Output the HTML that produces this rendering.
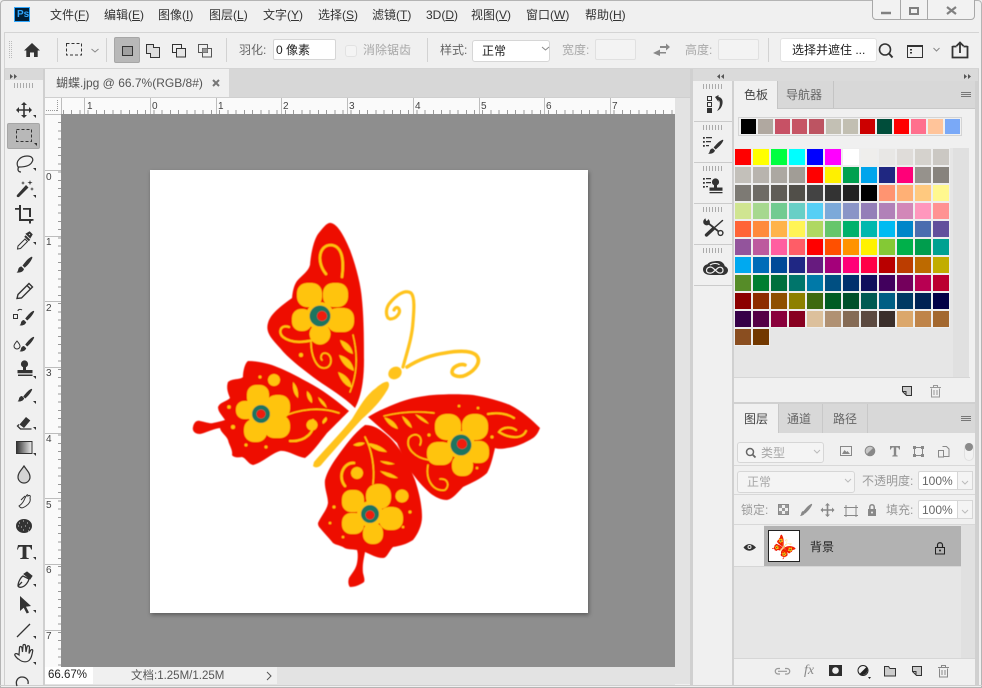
<!DOCTYPE html>
<html><head><meta charset="utf-8"><title>Photoshop</title>
<style>
html,body{margin:0;padding:0;background:#f0f0f0}
#p{position:relative;width:982px;height:688px;overflow:hidden;background:#f0f0f0;font-family:"Liberation Sans","Noto Sans CJK SC",sans-serif;font-size:12px;color:#333}
.b{position:absolute;box-sizing:border-box}
.t{position:absolute;white-space:nowrap;line-height:14px}
.g{color:#a8a8a8}.m{color:#666}
.r{position:absolute;font:10px/11px "Liberation Sans",sans-serif;color:#444}
u{text-decoration:underline}
.grip{position:absolute;height:5px;background:repeating-linear-gradient(90deg,#aaa 0 1px,transparent 1px 3px)}
.inp{position:absolute;box-sizing:border-box;background:#fff;border:1px solid #d6d6d6;border-radius:2px}
#sw{position:absolute;left:735px;top:149px;display:grid;grid-template-columns:repeat(12,16px);grid-auto-rows:16px;gap:2px}
#sw i{display:block;box-shadow:0 0 0 1px #eee}
#top{position:absolute;left:738px;top:117px;width:224px;height:19px;box-sizing:border-box;border:1px solid #d4d4d4;display:flex;gap:2px;padding:1px 0 0 2px}
#top i{display:block;width:15px;height:15px}
svg{position:absolute;left:0;top:0}
</style></head><body><div id="p">

<!-- structure -->
<div class="b" style="left:0;top:0;width:982px;height:688px;border:1px solid #b4b4b4;border-radius:4px 4px 0 0"></div>
<div class="b" style="left:4px;top:32px;width:975px;height:37px;border:1px solid #d4d4d4;border-width:1px 0 1px 1px"></div>
<div class="b" style="left:4px;top:69px;width:1px;height:616px;background:#cfcfcf"></div>
<div class="b" style="left:978px;top:69px;width:1px;height:616px;background:#cfcfcf"></div>
<div class="b" style="left:45px;top:69px;width:645px;height:28px;background:#d7d7d7"></div>
<div class="b" style="left:45px;top:69px;width:184px;height:28px;background:#f0f0f0"></div>
<div class="b" style="left:5px;top:69px;width:38px;height:11px;background:#d9d9d9"></div>
<div class="b" style="left:43px;top:69px;width:2px;height:616px;background:#cfcfcf"></div>
<div class="b" style="left:45px;top:97px;width:645px;height:1px;background:#cfcfcf"></div>
<div class="b" style="left:45px;top:98px;width:630px;height:16px;background:#fafafa"></div>
<div class="b" style="left:45px;top:114px;width:16px;height:553px;background:#fafafa"></div>
<div class="b" style="left:61px;top:110px;width:614px;height:4px;background:repeating-linear-gradient(90deg,transparent 0 2px,#999 2px 3px,transparent 3px 8.22px)"></div>
<div class="b" style="left:58px;top:114px;width:3px;height:553px;background:repeating-linear-gradient(180deg,#999 0 1px,transparent 1px 8.22px)"></div>
<div class="b" style="left:61px;top:114px;width:614px;height:553px;background:#8e8e8e"></div>
<div class="b" style="left:150px;top:170px;width:438px;height:443px;background:#fff;box-shadow:1px 2px 4px rgba(0,0,0,.35)"></div>
<div class="b" style="left:675px;top:98px;width:15px;height:586px;background:#e3e3e3"></div>
<div class="b" style="left:45px;top:667px;width:630px;height:18px;background:#e3e3e3"></div>
<div class="b" style="left:45px;top:667px;width:232px;height:17px;background:#f0f0f0"></div>
<div class="b" style="left:45px;top:667px;width:48px;height:17px;background:#fff"></div>
<div class="b" style="left:0;top:685px;width:982px;height:1px;background:#cfcfcf"></div>

<!-- right dock -->
<div class="b" style="left:690px;top:69px;width:3px;height:616px;background:#d0d0d0"></div>
<div class="b" style="left:693px;top:69px;width:285px;height:12px;background:#dadada"></div>
<div class="b" style="left:732px;top:81px;width:2px;height:604px;background:#d0d0d0"></div>
<div class="b" style="left:694px;top:121px;width:38px;height:1px;background:#cbcbcb"></div>
<div class="b" style="left:694px;top:162px;width:38px;height:1px;background:#cbcbcb"></div>
<div class="b" style="left:694px;top:203px;width:38px;height:1px;background:#cbcbcb"></div>
<div class="b" style="left:694px;top:244px;width:38px;height:1px;background:#cbcbcb"></div>
<div class="b" style="left:694px;top:285px;width:38px;height:1px;background:#cbcbcb"></div>
<div class="grip" style="left:703px;top:84px;width:20px"></div>
<div class="grip" style="left:703px;top:125px;width:20px"></div>
<div class="grip" style="left:703px;top:166px;width:20px"></div>
<div class="grip" style="left:703px;top:207px;width:20px"></div>
<div class="grip" style="left:703px;top:248px;width:20px"></div>
<div class="grip" style="left:14px;top:83px;width:20px"></div>
<div class="b" style="left:975px;top:81px;width:3px;height:604px;background:#d0d0d0"></div>

<!-- swatches panel -->
<div class="b" style="left:734px;top:81px;width:241px;height:28px;background:#d8d8d8"></div>
<div class="b" style="left:734px;top:81px;width:43px;height:28px;background:#f0f0f0"></div>
<div class="b" style="left:777px;top:81px;width:1px;height:28px;background:#c4c4c4"></div>
<div class="b" style="left:833px;top:81px;width:1px;height:28px;background:#c4c4c4"></div>
<div class="b" style="left:778px;top:108px;width:197px;height:1px;background:#c8c8c8"></div>
<div id="top"><i style="background:#000"></i><i style="background:#b0a8a0"></i><i style="background:#c75165"></i><i style="background:#c65565"></i><i style="background:#bd5462"></i><i style="background:#c3c0b4"></i><i style="background:#c2bfb2"></i><i style="background:#cc0000"></i><i style="background:#004d3a"></i><i style="background:#ff0000"></i><i style="background:#ff6f8d"></i><i style="background:#ffc49a"></i><i style="background:#7aa9f7"></i></div>
<div class="b" style="left:734px;top:148px;width:219px;height:229px;background:#e6e6e6"></div>
<div class="b" style="left:953px;top:148px;width:16px;height:229px;background:#e0e0e0"></div>
<div class="b" style="left:734px;top:377px;width:236px;height:1px;background:#d6d6d6"></div>
<div id="sw">
<i style="background:#ff0000"></i><i style="background:#ffff00"></i><i style="background:#00ff40"></i><i style="background:#00ffff"></i><i style="background:#0000ff"></i><i style="background:#ff00ff"></i><i style="background:#ffffff"></i><i style="background:#efeeec"></i><i style="background:#e8e7e5"></i><i style="background:#dfdcd9"></i><i style="background:#d5d2cd"></i><i style="background:#cbc8c3"></i>
<i style="background:#c3c0ba"></i><i style="background:#b8b4ae"></i><i style="background:#aca8a2"></i><i style="background:#a19d96"></i><i style="background:#ff0000"></i><i style="background:#fff000"></i><i style="background:#00a04f"></i><i style="background:#00a5ec"></i><i style="background:#1f2781"></i><i style="background:#ff0078"></i><i style="background:#96928c"></i><i style="background:#87837d"></i>
<i style="background:#7d7a74"></i><i style="background:#6e6b65"></i><i style="background:#605d57"></i><i style="background:#514f49"></i><i style="background:#434343"></i><i style="background:#333333"></i><i style="background:#222222"></i><i style="background:#000000"></i><i style="background:#ff9471"></i><i style="background:#ffb075"></i><i style="background:#ffc97f"></i><i style="background:#fff88f"></i>
<i style="background:#d0e591"></i><i style="background:#a6d88f"></i><i style="background:#72cb91"></i><i style="background:#68cfc6"></i><i style="background:#56cff5"></i><i style="background:#7ca9d9"></i><i style="background:#8a95c7"></i><i style="background:#947fb8"></i><i style="background:#b181b8"></i><i style="background:#d287b8"></i><i style="background:#ff97bd"></i><i style="background:#ff9292"></i>
<i style="background:#ff6437"></i><i style="background:#ff8b3c"></i><i style="background:#ffb34a"></i><i style="background:#fff455"></i><i style="background:#afd862"></i><i style="background:#66c66b"></i><i style="background:#00b16b"></i><i style="background:#00b8ae"></i><i style="background:#00bbf2"></i><i style="background:#0086c9"></i><i style="background:#4a6daf"></i><i style="background:#624f9c"></i>
<i style="background:#93549c"></i><i style="background:#bd5a9e"></i><i style="background:#ff5ea0"></i><i style="background:#ff5d67"></i><i style="background:#ff0000"></i><i style="background:#ff5000"></i><i style="background:#ff9300"></i><i style="background:#fff200"></i><i style="background:#84c935"></i><i style="background:#00b04a"></i><i style="background:#009d4d"></i><i style="background:#00a191"></i>
<i style="background:#00a9f0"></i><i style="background:#006cb8"></i><i style="background:#004a98"></i><i style="background:#1f2784"></i><i style="background:#671b7f"></i><i style="background:#a4007a"></i><i style="background:#ff0078"></i><i style="background:#ff0046"></i><i style="background:#b90000"></i><i style="background:#bc3d00"></i><i style="background:#bd6a00"></i><i style="background:#c1ad00"></i>
<i style="background:#568c28"></i><i style="background:#007e31"></i><i style="background:#006f3d"></i><i style="background:#00756b"></i><i style="background:#0079a8"></i><i style="background:#004f82"></i><i style="background:#00306d"></i><i style="background:#100f5c"></i><i style="background:#41005d"></i><i style="background:#74005c"></i><i style="background:#b80052"></i><i style="background:#bb0030"></i>
<i style="background:#8c0000"></i><i style="background:#8d2c00"></i><i style="background:#8e4f00"></i><i style="background:#8d8000"></i><i style="background:#3e6a10"></i><i style="background:#005c23"></i><i style="background:#005029"></i><i style="background:#005a52"></i><i style="background:#005e84"></i><i style="background:#003963"></i><i style="background:#002254"></i><i style="background:#020047"></i>
<i style="background:#360048"></i><i style="background:#550046"></i><i style="background:#8a003b"></i><i style="background:#880020"></i><i style="background:#dcc09c"></i><i style="background:#b09173"></i><i style="background:#856b55"></i><i style="background:#5c4a40"></i><i style="background:#3b2f2b"></i><i style="background:#dba76b"></i><i style="background:#bf8449"></i><i style="background:#a3682f"></i>
<i style="background:#8a4e20"></i><i style="background:#723800"></i>
</div>

<!-- layers panel -->
<div class="b" style="left:734px;top:402px;width:241px;height:2px;background:#d0d0d0"></div>
<div class="b" style="left:734px;top:404px;width:241px;height:29px;background:#d8d8d8"></div>
<div class="b" style="left:734px;top:404px;width:44px;height:29px;background:#f0f0f0"></div>
<div class="b" style="left:778px;top:404px;width:1px;height:29px;background:#c8c8c8"></div>
<div class="b" style="left:822px;top:404px;width:1px;height:29px;background:#c8c8c8"></div>
<div class="b" style="left:867px;top:404px;width:1px;height:29px;background:#c8c8c8"></div>
<div class="inp" style="left:737px;top:442px;width:87px;height:21px;border-radius:3px;background:#f4f4f4"></div>
<div class="b" style="left:734px;top:465px;width:241px;height:1px;background:#d8d8d8"></div>
<div class="inp" style="left:737px;top:471px;width:118px;height:22px;border-radius:3px;background:#f4f4f4"></div>
<div class="inp" style="left:918px;top:471px;width:55px;height:19px"></div>
<div class="b" style="left:957px;top:471px;width:16px;height:19px;background:#f4f4f4;border:1px solid #d6d6d6"></div>
<div class="b" style="left:734px;top:494px;width:241px;height:1px;background:#d8d8d8"></div>
<div class="inp" style="left:918px;top:500px;width:55px;height:19px"></div>
<div class="b" style="left:957px;top:500px;width:16px;height:19px;background:#f4f4f4;border:1px solid #d6d6d6"></div>
<div class="b" style="left:734px;top:524px;width:241px;height:1px;background:#d8d8d8"></div>
<div class="b" style="left:734px;top:525px;width:227px;height:133px;background:#e6e6e6"></div>
<div class="b" style="left:734px;top:525px;width:30px;height:41px;background:#f0f0f0"></div>
<div class="b" style="left:961px;top:525px;width:14px;height:133px;background:#e0e0e0"></div>
<div class="b" style="left:764px;top:526px;width:197px;height:40px;background:#b2b2b2"></div>
<div class="b" style="left:734px;top:566px;width:227px;height:1px;background:#d6d6d6"></div>
<div class="b" style="left:734px;top:658px;width:241px;height:1px;background:#d6d6d6"></div>
<div class="b" style="left:768px;top:530px;width:32px;height:32px;background:#fff;border:1px solid #222"></div>

<!-- options fields -->
<div class="b" style="left:114px;top:37px;width:26px;height:26px;background:#b8b8b8;border:1px solid #a6a6a6;border-radius:2px"></div>
<div class="inp" style="left:273px;top:39px;width:63px;height:21px"></div>
<div class="inp" style="left:345px;top:45px;width:12px;height:12px;background:#f4f4f4;border-color:#e2e2e2;border-radius:3px"></div>
<div class="inp" style="left:472px;top:40px;width:78px;height:22px;border-radius:3px"></div>
<div class="inp" style="left:595px;top:39px;width:41px;height:21px;background:#f3f3f3;border-color:#e0e0e0"></div>
<div class="inp" style="left:718px;top:39px;width:41px;height:21px;background:#f3f3f3;border-color:#e0e0e0"></div>
<div class="inp" style="left:780px;top:38px;width:97px;height:24px;border-radius:3px;border-color:#e2e2e2"></div>
<div class="b" style="left:7px;top:123px;width:33px;height:26px;background:#b8b8b8;border:1px solid #a6a6a6;border-radius:2px"></div>

<!-- window buttons -->
<div class="b" style="left:872px;top:-2px;width:103px;height:22px;background:#f2f2f2;border:1px solid #a8a8a8;border-radius:0 0 4px 4px"></div>
<div class="b" style="left:900px;top:0;width:1px;height:19px;background:#a8a8a8"></div>
<div class="b" style="left:927px;top:0;width:1px;height:19px;background:#a8a8a8"></div>

<!-- graphics -->
<svg width="982" height="688" viewBox="0 0 982 688" fill="none">
<defs>
<filter id="sf" x="-5%" y="-5%" width="110%" height="110%"><feGaussianBlur stdDeviation=".45"/></filter>
<g id="bf" filter="url(#sf)">
 <!-- wings -->
 <g fill="#ee0c00">
 <path d="M331 223C338 224 345 238 350 250C356 266 361 285 362 300C364 320 364 345 364 360C364 378 362 395 355 408C343 396 328 388 313 377C300 367 288 358 280 348C273 340 265 333 268 323C270 315 278 308 292 298C293 288 295 284 297 281C302 275 308 272 310 265C311 252 314 240 318 234C323 228 327 222 331 223Z"/>
 <path d="M248 361C258 361 270 364 277 367C290 372 302 379 313 385C327 393 338 402 349 411C340 420 332 428 327 433C319 443 313 452 305 458C297 457 288 450 280 451C272 453 262 463 253 465C248 464 246 458 242 457C237 458 233 457 232 455C233 450 229 445 228 440C226 435 221 433 220 428C212 429 206 433 200 434C195 434 192 431 193 427C194 422 197 420 200 421C206 422 210 424 213 423C218 422 222 421 225 420C222 415 218 412 218 407C220 402 226 402 230 398C228 393 226 388 228 382C233 378 240 380 243 377C243 371 245 363 248 361Z"/>
 <path d="M368 417C378 411 389 406 400 402C411 398 422 396 433 395C447 394 461 394 473 395C486 397 500 401 510 405C522 411 532 420 540 428C538 433 536 436 533 438C525 443 516 447 507 448C502 449 498 449 495 448C493 456 491 466 487 473C481 479 471 483 463 487C458 492 453 499 447 500C441 500 435 497 430 493C423 487 416 479 410 470C405 461 401 452 397 443C389 435 378 426 368 417Z"/>
 <path d="M365 425C372 425 378 428 383 432C390 437 396 444 400 450C406 460 411 470 415 480C419 492 422 505 422 517C422 525 418 534 413 540C407 544 400 546 393 547C389 551 387 558 383 558C376 558 370 554 365 552C364 558 362 565 363 573C364 577 365 580 364 582C360 585 355 587 350 587C348 585 348 581 349 578C352 573 356 569 357 563C358 558 358 553 357 550C352 549 347 550 343 547C339 545 336 545 333 543C329 538 324 533 320 528C318 526 318 524 318 523C321 516 327 510 328 503C328 496 324 488 325 480C327 472 332 464 337 457C345 446 354 433 365 425Z"/>
 </g>
 <!-- body / antennae -->
 <path fill="#ffc31a" d="M314 462C325 449 340 434 352 419C360 406 366 395 376 388C380 384 386 381 388 382C390 384 389 388 386 392C380 402 371 411 362 419C350 432 335 449 322 464C319 468 315 468 313 466Z"/>
 <ellipse cx="395" cy="373" rx="7" ry="6" transform="rotate(-35 395 373)" fill="#ffc31a"/>
 <g stroke="#ffc31a" stroke-linecap="round" fill="none">
 <path stroke-width="3.200" d="M403 367C407 352 412 338 413 322C414 310 415 297 411 293C405 289 396 295 389 304C385 310 386 318 390 319C396 319 401 313 399 309C397 306 395 308 394 310"/>
 <path stroke-width="3.600" d="M407 367C418 360 430 355 445 353C456 351 470 350 476 355C482 361 476 370 466 375C460 378 452 376 452 372C452 367 460 363 465 365"/>
 </g>
 <!-- flowers -->
 <g fill="#ffc40a">
 <circle cx="320" cy="316" r="14"/><circle cx="261" cy="414" r="13"/><circle cx="461" cy="445" r="14"/><circle cx="370" cy="514" r="13"/>
 <rect x="297" y="283" width="25" height="24" rx="10" /><rect x="323" y="283" width="25" height="24" rx="10"/><rect x="327" y="308" width="27" height="24" rx="10"/><circle cx="320" cy="334" r="10.500"/><rect x="292" y="309" width="20" height="22" rx="9"/>
 <rect x="247" y="385" width="22" height="22" rx="9"/><rect x="266" y="395" width="24" height="24" rx="10"/><rect x="264" y="415" width="26" height="23" rx="10"/><rect x="244" y="419" width="23" height="23" rx="10"/><rect x="236" y="401" width="19" height="18" rx="8"/>
 <rect x="435" y="414" width="26" height="26" rx="11"/><rect x="462" y="414" width="26" height="26" rx="11"/><rect x="467" y="441" width="22" height="22" rx="9"/><rect x="452" y="455" width="21" height="21" rx="9"/><rect x="427" y="442" width="26" height="23" rx="10"/>
 <rect x="366" y="484" width="25" height="25" rx="11"/><rect x="379" y="507" width="24" height="23" rx="10"/><rect x="363" y="523" width="20" height="21" rx="9"/><rect x="342" y="513" width="22" height="21" rx="9"/><rect x="342" y="490" width="22" height="22" rx="9"/>
 <circle cx="274" cy="380" r="6"/><circle cx="402" cy="496" r="6.500"/><circle cx="357" cy="473" r="6"/><circle cx="312" cy="425" r="5.500"/>
 <circle cx="301" cy="355" r="2"/><circle cx="229" cy="407" r="1.800"/><circle cx="233" cy="427" r="2"/><circle cx="246" cy="445" r="1.500"/><circle cx="266" cy="447" r="1.500"/><circle cx="260" cy="377" r="1.500"/><circle cx="459" cy="406" r="1.300"/><circle cx="478" cy="408" r="1.300"/><circle cx="492" cy="437" r="1.500"/><circle cx="429" cy="435" r="1.500"/><circle cx="477" cy="468" r="1.300"/><circle cx="334" cy="507" r="1.500"/><circle cx="330" cy="523" r="1.300"/><circle cx="343" cy="537" r="1.300"/><circle cx="410" cy="512" r="1.500"/><circle cx="403" cy="527" r="1.300"/>
 <path d="M340 340Q351 343 353 354Q343 351 340 340ZM339 355Q352 358 354 371Q343 367 339 355ZM338 372Q350 376 352 388Q342 385 338 372Z"/>
 <path d="M293 382Q299 388 298 398Q292 393 293 382ZM307 391Q313 396 312 403Q306 399 307 391ZM318 397Q325 401 327 408Q320 404 318 397ZM326 417Q329 420 323 424Q321 421 326 417Z"/>
 <path d="M384 417Q395 420 398 429Q389 427 384 417ZM402 416Q410 420 412 428Q405 425 402 416ZM415 414Q424 417 429 424Q420 421 415 414Z"/>
 <path d="M353 445Q359 441 365 443Q360 448 353 445ZM367 443Q380 444 387 452Q375 452 367 443ZM380 461Q388 461 395 464Q386 466 380 461ZM380 471Q390 472 398 478Q388 479 380 471Z"/>
 </g>
 <g stroke="#ffc40a" fill="none" stroke-linecap="round">
 <path stroke-width="2.600" d="M326 274C316 262 319 245 331 245C343 246 344 262 342 277"/>
 <path stroke-width="2.200" d="M289 327C280 324 278 333 283 337C292 344 305 342 313 340"/>
 <path stroke-width="1.600" d="M311 342C311 355 316 369 325 368C333 367 333 354 325 353C321 353 320 358 322 360"/>
 <path stroke-width="1.400" d="M353 335C358 355 357 375 350 392"/>
 <path stroke-width="1.600" d="M280 418C300 408 322 407 339 413"/>
 <path stroke-width="2.200" d="M290 441C305 442 316 432 313 420"/>
 <path stroke-width="1.400" d="M384 416C400 412 418 411 434 413"/>
 <path stroke-width="1.600" d="M429 460C415 458 405 448 409 438C415 431 424 436 420 445"/>
 <path stroke-width="1.600" d="M428 465C425 482 435 492 445 490C450 486 448 478 440 479"/>
 <path stroke-width="2" d="M488 414C498 412 508 414 514 418"/>
 <path stroke-width="2" d="M526 431C522 440 508 438 499 432C503 426 512 427 516 430"/>
 <path stroke-width="1.600" d="M365 437C372 450 375 468 373 484"/>
 <path stroke-width="2.600" d="M345 486C337 476 344 462 354 463"/>
 </g>
 <!-- centres -->
 <g fill="#1c7560">
 <circle cx="320" cy="316" r="10.500"/><circle cx="261" cy="414" r="9"/><circle cx="461" cy="445" r="10.500"/><circle cx="370" cy="514" r="9"/>
 </g>
 <g fill="#f01a08">
 <circle cx="322" cy="316" r="5"/><circle cx="261" cy="414" r="4.500"/><circle cx="462" cy="444" r="5"/><circle cx="370" cy="515" r="4.500"/>
 </g>
</g>
</defs>
<use href="#bf"/>
<svg x="769" y="531" width="30" height="30" viewBox="150 170 438 443"><use href="#bf"/></svg>

<!-- Ps logo -->
<rect x="14.500" y="7.500" width="15" height="14" fill="#001e36" stroke="#31a8ff"/>

<!-- ruler major ticks -->
<path stroke="#bdbdbd" d="M84.500 98v16M150.500 98v16M216.500 98v16M281.500 98v16M347.500 98v16M413.500 98v16M479.500 98v16M544.500 98v16M610.500 98v16M45 170.500h16M45 236.500h16M45 301.500h16M45 367.500h16M45 433.500h16M45 498.500h16M45 564.500h16M45 630.500h16M61.500 98v16M45 114.500h16"/>
<path stroke="#999" stroke-dasharray="1 1" d="M46 110.500h12M57.500 100v12"/>

<!-- tab arrows -->
<g fill="#555">
<path d="M10 74l3 2.500-3 2.500zM14 74l3 2.500-3 2.500zM964 74l3 2.500-3 2.500zM968 74l3 2.500-3 2.500zM724 74l-3 2.500 3 2.500zM720 74l-3 2.500 3 2.500z"/>
</g>
<path d="M213 80l6 6m0-6l-6 6" stroke="#777" stroke-width="2"/>

<!-- window icons -->
<path d="M881 13h10" stroke="#808080" stroke-width="2.500"/>
<rect x="910" y="8" width="8" height="6" stroke="#808080" stroke-width="2"/>
<path d="M947 7l9 7m0-7l-9 7" stroke="#808080" stroke-width="2.200"/>

<!-- options icons -->
<path d="M9.500 41v17M11.500 41v17" stroke="#bbb" stroke-dasharray="1 1"/>
<path fill="#333" d="M24 50.500l8-7.500 8 7.500h-2.300v6.500h-3.700v-4.500h-4v4.500h-3.700v-6.500z"/>
<path stroke="#d2d2d2" d="M57.500 38v24M106.500 38v24M226.500 38v24M427.500 38v24M768.500 38v24"/>
<rect x="66.500" y="43.500" width="15" height="11.500" stroke="#333" stroke-dasharray="3 2"/>
<path d="M91.500 49l3.500 3 3.500-3" stroke="#888"/>
<rect x="122.500" y="46.500" width="10" height="9" stroke="#333" fill="#a0a0a0"/>
<path d="M146.500 44.500h7v3h6v10h-9v-4h-4z" stroke="#333" fill="#ddd"/>
<rect x="172.500" y="44.500" width="9" height="8" stroke="#333"/><rect x="176.500" y="48.500" width="9" height="8.500" stroke="#333" fill="#e6e6e6"/>
<rect x="198.500" y="44.500" width="9" height="8" stroke="#555"/><rect x="202.500" y="48.500" width="9" height="8.500" stroke="#555"/><rect x="202.500" y="48.500" width="5" height="4" fill="#999"/>
<path d="M542 47l3.500 3 3.500-3" stroke="#888"/>
<path fill="#888" d="M660 47.500h6v-2.500l4 3.500-4 3.500v-2.500h-6zM666 53.500h-6v-2.500l-7 3.500 7 3v-2.500h6z" transform="translate(0 -1.500)"/>
<circle cx="885" cy="49.500" r="5.500" stroke="#333" stroke-width="1.600"/><path d="M889 53.500l3.500 4" stroke="#333" stroke-width="2"/>
<rect x="907.500" y="45.500" width="15" height="12" stroke="#333"/><path d="M907 45h16v2h-16zM910 49h2v1.500h-2zM910 52h2v1.500h-2z" fill="#333"/>
<path d="M933.500 48l3 3 3-3" stroke="#888"/>
<path d="M952.500 46.500h4M963.500 46.500h4M952.500 46v11.500h15V46" stroke="#333" stroke-width="1.800"/><path d="M960 53v-10M956.500 46l3.500-3.500 3.500 3.500" stroke="#333" stroke-width="1.800"/>

<!-- tool icons -->
<g fill="#333" stroke="none">
<!-- move -->
<path d="M24 102l3 3h-2.200v4.200H29V107l3 3-3 3v-2.200h-4.200V115H27l-3 3-3-3h2.200v-4.200H19V113l-3-3 3-3v2.200h4.200V105H21z"/>
<!-- wand -->
<path d="M17 195l9-10 2.500 2.500-9.500 9.500c-1.500 .5-3-.5-2-2zM30 180l.6 2 2 .6-2 .6-.6 2-.6-2-2-.6 2-.6zM23 181l.5 1.500 1.500.5-1.500.5-.5 1.500-.5-1.500-1.500-.5 1.500-.5zM32 187l.5 1.500 1.500.5-1.500.5-.5 1.500-.5-1.500-1.500-.5 1.500-.5z"/>
<!-- crop -->
<path d="M19 205h2v14h11v2H19zM15 208h4v1.800h-4zM23 208h8v9h-2v-7.200h-6zM31 219h2.500v1.800H31zM29 221h2v2.500h-2z"/>
<!-- brush -->
<path d="M31 257c1.200-.5 1.700 0 1.200 1.200-1.500 3.500-4.500 7-7.500 9.500l-2.200-2.200c2.500-3 5-6.800 8.500-8.500zM21.500 266.500l2.500 2.500c-.8 2.800-4 4-7.500 3.500 1.800-1 1.500-3 2-4 .7-1.300 1.800-2 3-2z"/>
<!-- history brush -->
<path d="M33 311c1-.4 1.400 0 1 1-1.300 3-4 6.200-6.800 8.500l-2-2c2.300-2.700 4.700-6 7.800-7.500zM24 320l2.200 2.200c-.7 2.500-3.600 3.600-6.700 3.200 1.600-1 1.300-2.700 1.800-3.600.6-1.200 1.600-1.800 2.700-1.800z"/>
<!-- mixer -->
<path d="M33 337c1-.4 1.400 0 1 1-1.300 3-4 6.200-6.800 8.500l-2-2c2.300-2.700 4.700-6 7.800-7.500zM24 346l2.200 2.200c-.7 2.500-3.600 3.600-6.700 3.200 1.600-1 1.300-2.700 1.800-3.600.6-1.200 1.600-1.800 2.700-1.800z"/>
<!-- stamp -->
<circle cx="24.500" cy="364" r="3.600"/><path d="M23 366h3v4h6.500v3.200h-15V370H23zM18 374.500h14.500v1.500H18z"/>
<!-- history -->
<path d="M31 391c1-.4 1.400 0 1 1-1.300 3-4 6.200-6.800 8.500l-2-2c2.300-2.700 4.700-6 7.800-7.500zM22 398l2.200 2.200c-.7 2.500-3.600 3.600-6.700 3.200 1.600-1 1.300-2.700 1.800-3.600.6-1.200 1.600-1.800 2.700-1.800z" transform="translate(0 -2)"/>
<!-- eraser -->
<path d="M26 417l4.300 3.500-6.300 7.500-4.500-3.500z"/>
<!-- T -->
<path d="M18 545h14v4.500h-1c-.3-2-1-2.800-3-2.800h-1.600v10c0 1 .6 1.300 2.300 1.300v1H20.300v-1c1.700 0 2.300-.3 2.300-1.300v-10H21c-2 0-2.700.8-3 2.800h-1z"/>
<!-- arrow -->
<path d="M20 596l11 10-5 .7 3 5.800-2.300 1-3-5.800-3.700 3.300z"/>
<!-- sponge -->
<ellipse cx="24" cy="526" rx="8" ry="7"/>
<!-- tool corner marks -->
<path d="M36 118v-3h-3zM37 146v-3h-3zM36 171v-3h-3zM36 198v-3h-3zM36 245v-3h-3zM36 379v-3h-3zM36 404v-3h-3zM36 430v-3h-3zM36 456v-3h-3zM36 560v-3h-3zM36 587v-3h-3zM36 613v-3h-3zM36 639v-3h-3zM36 665v-3h-3z"/>
</g>
<!-- sponge holes -->
<path d="M19 523h1M23 521h1M27 523h1M21 527h1M25 526h1M29 528h1M23 530h1M18 526h1M28 531h1" stroke="#ccc"/>
<g stroke="#333" fill="none">
<rect x="16.500" y="129.500" width="15" height="12" stroke-dasharray="3 2"/>
<!-- lasso -->
<path d="M18 167c-3-6 3-11 9-11 5 0 7 3 5 6-2 4-8 5-13 5zM19 167c-2 2-1 5 2 5" stroke-width="1.200"/>
<!-- eyedropper -->
<path d="M18 246l7-7 2.500 2.500-7 7-3 .5z" stroke-width="1"/><path d="M25 236l4.500 4.500M27 234l2.500-1.500 2 2-1.500 2.500z" stroke-width="2"/>
<!-- pencil -->
<path d="M17 298.500l1-4 11-11 3.500 3.500-11 11z" stroke-width="1.400"/><path d="M27 285.500l3.500 3.500" stroke-width="1.400"/>
<!-- history source -->
<rect x="13.500" y="314.500" width="4" height="4" stroke-width="1"/><path d="M18 311c0-2 3-2 4-1" stroke-width="1"/>
<!-- mixer drop -->
<path d="M17 341c-2 2.500-3 3.500-3 5a3 3 0 0 0 6 0c0-1.500-1-2.500-3-5z" stroke-width="1"/>
<!-- eraser base -->
<path d="M19 424.500l-1.500 1.500 3 3h11" stroke-width="1.300"/>
<!-- drop -->
<path d="M24 466c-3 4.500-6 7-6 11a6 6 0 0 0 12 0c0-4-3-6.500-6-11z" stroke-width="1.200" fill="#d4d4d4"/>
<!-- smudge -->
<path d="M19 506c3-2 5-5 6-8 1-2 3-5 3-2 1-1 3-1 2 2 1 3-1 6-4 8s-5 3-7 0zM21 500l4-4" stroke-width="1"/>
<!-- pen -->
<path d="M18 586c0-4 3-9 5-10l6 3c-.6 3-3.500 7-7 8-1.500.5-3 .5-4-1zM18 586l4-4" stroke-width="1.300"/><path d="M24 574l3-2 5 4-2 3z" fill="#333" stroke-width="1"/>
<!-- line -->
<path d="M17 637l13-13" stroke-width="1.300"/>
<!-- hand -->
<path d="M18 659c-2-2-4-4-3-5 1-1 3 0 4 1l.5-7c0-2 2-2 2.500 0l.5 4 .5-6c0-2 2.500-2 2.500 0l.5 6 1-5c.5-2 2.500-1.500 2.500 .5l-.5 6 1.500-3c1-1.500 2.500-1 2.200 .5-.5 3-1 6-2.500 8-2 3.500-7.500 4-11.700 0z" stroke-width="1.200"/>
<!-- rotate -->
<path d="M17 686c-2-5 1-9 5-9s7 3 6 7" stroke-width="1.300"/>
</g>
<!-- gradient -->
<linearGradient id="gr" x1="0" x2="1"><stop offset="0" stop-color="#333"/><stop offset="1" stop-color="#eee"/></linearGradient>
<rect x="16.500" y="441.500" width="15.500" height="12" fill="url(#gr)" stroke="#333"/>

<!-- dock icons -->
<g fill="#333">
<rect x="707.500" y="96.500" width="4" height="4" fill="none" stroke="#333"/><rect x="707.500" y="102.500" width="4" height="4" fill="none" stroke="#333"/><rect x="707" y="108" width="5" height="5"/>
<path d="M715 97l3.500-2v2c3.500 .5 4.500 3.500 4 6.500-.5 3-2 6-5.500 7.500 2-3 3.500-6 2.500-9.500-.3-1-1-1.500-1-1.500v2z"/>
<path d="M703 137h1.800v1.800H703zM706 137h6v1.300h-6zM703 141h1.800v1.800H703zM706 141h5v1.300h-5zM703 145h1.800v1.800H703zM706 145h3v1.300h-3z"/>
<path d="M722 140c1.200-.5 1.600 0 1.100 1-1.500 3.200-4.500 6.200-7.500 8.500l-2-2c2.500-2.800 5-6 8.400-7.500zM713 148.500l2 2c-.8 2.600-3.800 3.500-7 3.200 1.800-1 1.500-2.500 2-3.500.6-1.200 1.800-1.900 3-1.700z"/>
<path d="M703 178h1.800v1.800H703zM706 178h5v1.300h-5zM703 182h1.800v1.800H703zM706 182h5v1.300h-5zM703 186h1.800v1.800H703zM706 186h2v1.300h-2z"/>
<circle cx="715.500" cy="182" r="3.600"/><path d="M714 184h3v3.500h5.500v3.200h-13v-3.200h4.500zM709.500 192h13v1.300h-13z"/>
</g>
<!-- tools: wrench + screwdriver -->
<g fill="none" stroke="#333" stroke-linecap="round">
<path d="M708 223L718 231" stroke-width="1.800"/>
<path d="M705 219.500c-1.500 1.500-1.500 3.500 0 4.500 1.500 1 3 .8 4-.5 .5-1.300 0-2.500-.5-3.200l-1.500 1.700-1.500-1z" stroke-width="1.400" fill="#333"/>
<circle cx="720.500" cy="233" r="2.400" stroke-width="1.400"/>
<path d="M722.500 220.500L714 228" stroke-width="1.500"/>
<path d="M713.500 228.500L706.500 235" stroke-width="3.400"/>
</g>
<!-- creative cloud -->
<path fill="#333" d="M718 261c3.500 0 6.300 2.500 6.800 5.200 2 .7 3.200 2.200 3.200 4 0 2.800-2.500 4.800-6 4.800h-11c-5 0-8-2.200-8-5.500 0-2.800 2-4.700 4.500-5.200C708.500 262 713 261 718 261z"/>
<path d="M706.500 270.500c0-3 4-4.800 6.800-2.200l4 3.700c2.500 2 5.700 1 5.700-1.800s-3-3.800-5-2.300l-5 4.300c-2 1.600-6.500 1-6.500-1.700zM710 265c3-2 7-2 9.500-.3" stroke="#f0f0f0" stroke-width="1.200"/>

<!-- panel menu icons -->
<path d="M961 92.500h10M961 94.500h10M961 96.500h10M961 416.500h10M961 418.500h10M961 420.500h10" stroke="#777"/>
<!-- new/trash swatch -->
<path d="M902.500 386.500h9v9h-5l-4-4z" fill="#ccc" stroke="#333"/><path d="M902.500 391.500h3.500v3.500" stroke="#333"/>
<path d="M931.500 388.500v8.500h8v-8.500M930 387.500h11M933.500 387v-1.500h4v1.500M934 390v5M937 390v5" stroke="#999"/>

<!-- layer filter icons -->
<circle cx="750" cy="452" r="3.500" stroke="#666" stroke-width="1.500"/><path d="M752.500 454.500l3 3" stroke="#666" stroke-width="1.800"/>
<path d="M814 450l3 3 3-3M845 479l3 3 3-3M962 481l3 3 3-3M962 510l3 3 3-3" stroke="#bbb" fill="none"/>
<rect x="840.500" y="446.500" width="11" height="9" stroke="#888"/><path d="M842 454l2.500-4 2 2 1-1 2.500 3z" fill="#888"/>
<circle cx="870" cy="451" r="4.800" fill="#c8c8c8" stroke="#888"/><path d="M873.400 447.600a4.800 4.800 0 0 1-6.800 6.800z" fill="#888"/>
<path fill="#888" d="M890 446h10v3.500h-1c-.2-1.300-.7-2-1.800-2h-1v7c0 .8 .4 1 1.500 1v1h-5.400v-1c1.100 0 1.500-.2 1.500-1v-7h-1c-1.100 0-1.600 .7-1.800 2h-1z"/>
<path d="M914.500 447.500h8v8h-8z" stroke="#888"/><path d="M913 446h3v3h-3zM921 446h3v3h-3zM913 454h3v3h-3zM921 454h3v3h-3z" fill="#888"/>
<path d="M942.500 446.500h4l2.500 2.500v7.500h-5M938.500 450.500h5v6.500h-5z" stroke="#888"/>
<rect x="964.500" y="443.500" width="9" height="17" rx="4.500" fill="#f2f2f2" stroke="#e0e0e0"/><circle cx="969" cy="447" r="4" fill="#8a8a8a"/>

<!-- lock row -->
<rect x="778.500" y="504.500" width="10" height="10" stroke="#888"/><path d="M779 505h3v3h-3zM785 505h3v3h-3zM782 508h3v3h-3zM779 511h3v3h-3zM785 511h3v3h-3z" fill="#999"/>
<path d="M810 505c1-.4 1.400 0 1 1-1.300 3-4 6.200-6.800 8.500l-2-2c2.300-2.700 4.700-6 7.800-7.500zM802 512l2 2c-.7 1.800-2.800 3-5 3 1-1 1-2 1.300-3 .3-1 1-1.700 1.700-2z" fill="#888" transform="translate(1 -1)"/>
<path fill="#888" d="M827.500 503l2.500 2.500h-1.700v3.700h3.700v-1.700l2.500 2.500-2.500 2.500v-1.700h-3.700v3.700h1.700l-2.500 2.500-2.500-2.500h1.700v-3.700h-3.700v1.700l-2.500-2.500 2.500-2.500v1.700h3.700v-3.700H825z"/>
<path d="M846 507.500h10v8h-10zM844 507.500h14M846 505v12M856 505v12M844 515.500h14" stroke="#888"/>
<path fill="#888" d="M868 509h8v7h-8z"/><path d="M869.800 509v-2c0-3 4.400-3 4.400 0v2" stroke="#888" stroke-width="1.500"/><circle cx="872" cy="512.500" r="1" fill="#f0f0f0"/>

<!-- layer row icons -->
<path d="M743.500 547.500c3-4 8-5 12.500 0-4.500 4.500-9.500 4-12.500 0z" fill="#333"/><circle cx="749.500" cy="547" r="2" fill="#f0f0f0"/><circle cx="749.500" cy="547" r="1" fill="#333"/>
<rect x="935.500" y="547.500" width="9" height="6.500" stroke="#222"/><path d="M937.500 547v-2c0-3 5-3 5 0v2" stroke="#222" stroke-width="1.200"/><circle cx="940" cy="550.500" r="1" fill="#222"/>

<!-- layer footer -->
<path d="M780 668.500h-2a2.700 2.700 0 0 0 0 5.500h2M785 668.500h2a2.700 2.700 0 0 1 0 5.500h-2M778 671.300h9" stroke="#999" stroke-width="1.200"/>
<rect x="829" y="665" width="13" height="11" fill="#2e2e2e"/><circle cx="835.500" cy="670.500" r="3.300" fill="#f0f0f0"/>
<circle cx="863" cy="670.500" r="5" fill="#f0f0f0" stroke="#222"/><path d="M866.500 667a5 5 0 0 1-7 7z" fill="#222"/><path d="M868 677h3l-1.500 2z" fill="#222"/>
<path d="M884.500 666.500h4l1.500 2h5.500v7.500h-11z" fill="#ccc" stroke="#333"/>
<path d="M912.500 666.500h9v9h-5l-4-4z" fill="#ccc" stroke="#333"/><path d="M912.500 671.500h3.500v3.500" stroke="#333"/>
<path d="M939.500 668.500v8.500h8v-8.500M938 667.500h11M941.500 667v-1.500h4v1.500M942 670v5M945 670v5" stroke="#888"/>
<path d="M267 672l4 4-4 4" stroke="#555" fill="none"/>
</svg>

<!-- text -->
<span class="t" style="left:17px;top:9px;font-size:10px;line-height:11px;color:#31a8ff;font-weight:bold">Ps</span>
<span class="t" style="left:50px;top:8px">文件(<u>F</u>)</span>
<span class="t" style="left:104px;top:8px">编辑(<u>E</u>)</span>
<span class="t" style="left:158px;top:8px">图像(<u>I</u>)</span>
<span class="t" style="left:209px;top:8px">图层(<u>L</u>)</span>
<span class="t" style="left:263px;top:8px">文字(<u>Y</u>)</span>
<span class="t" style="left:318px;top:8px">选择(<u>S</u>)</span>
<span class="t" style="left:372px;top:8px">滤镜(<u>T</u>)</span>
<span class="t" style="left:426px;top:8px">3D(<u>D</u>)</span>
<span class="t" style="left:471px;top:8px">视图(<u>V</u>)</span>
<span class="t" style="left:526px;top:8px">窗口(<u>W</u>)</span>
<span class="t" style="left:585px;top:8px">帮助(<u>H</u>)</span>

<span class="t m" style="left:239px;top:43px">羽化:</span>
<span class="t" style="left:276px;top:43px;color:#222">0 像素</span>
<span class="t g" style="left:363px;top:43px">消除锯齿</span>
<span class="t m" style="left:440px;top:43px">样式:</span>
<span class="t" style="left:482px;top:44px;color:#222">正常</span>
<span class="t g" style="left:562px;top:43px">宽度:</span>
<span class="t g" style="left:685px;top:43px">高度:</span>
<span class="t" style="left:792px;top:43px;color:#222">选择并遮住 ...</span>

<span class="t" style="left:56px;top:76px;color:#555">蝴蝶.jpg @ 66.7%(RGB/8#)</span>

<span class="r" style="left:87px;top:101px">1</span><span class="r" style="left:152px;top:101px">0</span><span class="r" style="left:218px;top:101px">1</span><span class="r" style="left:283px;top:101px">2</span><span class="r" style="left:349px;top:101px">3</span><span class="r" style="left:415px;top:101px">4</span><span class="r" style="left:481px;top:101px">5</span><span class="r" style="left:546px;top:101px">6</span><span class="r" style="left:612px;top:101px">7</span>
<span class="r" style="left:46px;top:172px">0</span><span class="r" style="left:46px;top:237px">1</span><span class="r" style="left:46px;top:303px">2</span><span class="r" style="left:46px;top:368px">3</span><span class="r" style="left:46px;top:434px">4</span><span class="r" style="left:46px;top:500px">5</span><span class="r" style="left:46px;top:565px">6</span><span class="r" style="left:46px;top:631px">7</span>

<span class="t" style="left:48px;top:668px;font-size:11.500px;color:#222">66.67%</span>
<span class="t" style="left:131px;top:669px;color:#555;font-size:11.500px">文档:1.25M/1.25M</span>

<span class="t" style="left:744px;top:88px;color:#444">色板</span>
<span class="t m" style="left:786px;top:88px">导航器</span>
<span class="t" style="left:744px;top:412px;color:#444">图层</span>
<span class="t m" style="left:787px;top:412px">通道</span>
<span class="t m" style="left:833px;top:412px">路径</span>
<span class="t g" style="left:761px;top:446px">类型</span>
<span class="t g" style="left:747px;top:475px">正常</span>
<span class="t" style="left:862px;top:474px;color:#999">不透明度:</span>
<span class="t" style="left:922px;top:474px;color:#666">100%</span>
<span class="t" style="left:741px;top:503px;color:#999">锁定:</span>
<span class="t" style="left:886px;top:503px;color:#999">填充:</span>
<span class="t" style="left:922px;top:503px;color:#666">100%</span>
<span class="t" style="left:810px;top:540px;color:#222">背景</span>
<span class="t" style="left:804px;top:664px;font:italic 14px/14px 'Liberation Serif',serif;color:#888">fx</span>
</div></body></html>
